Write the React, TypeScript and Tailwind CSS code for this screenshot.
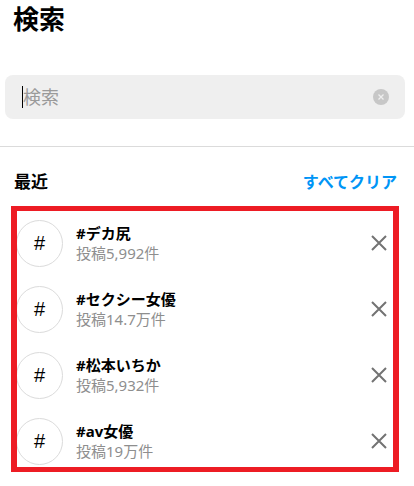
import React from "react";

const items = [
  { tag: "#デカ尻", count: "投稿5,992件" },
  { tag: "#セクシー女優", count: "投稿14.7万件" },
  { tag: "#松本いちか", count: "投稿5,932件" },
  { tag: "#av女優", count: "投稿19万件" },
];

const font = { fontFamily: '"Noto Sans", "Noto Sans CJK JP", sans-serif' };

function CloseIcon() {
  return (
    <svg width="16" height="16" viewBox="0 0 16 16" fill="none">
      <path d="M1 1L15 15M15 1L1 15" stroke="#737373" strokeWidth="2" strokeLinecap="butt" />
    </svg>
  );
}

export default function App() {
  return (
    <div className="w-[414px] h-[486px] bg-white text-black overflow-hidden" style={font}>
      <h1 className="px-[13px] leading-[38px] text-[26px] font-bold">検索</h1>

      <div className="ml-[5px] mr-[9px] mt-[37px] h-[44px] rounded-[8px] bg-[#efefef] flex items-center pl-[17px] pr-[16px]">
        <div className="flex items-center flex-1">
          <span className="w-px h-[22px] bg-black" />
          <span className="text-[18px] text-[#9a9a9a] leading-none">検索</span>
        </div>
        <div className="w-4 h-4 rounded-full bg-[#c7c7c7] flex items-center justify-center">
          <svg width="6" height="6" viewBox="0 0 6 6">
            <path d="M0.5 0.5L5.5 5.5M5.5 0.5L0.5 5.5" stroke="#efefef" strokeWidth="1.3" />
          </svg>
        </div>
      </div>

      <div className="mt-[27px] h-px bg-[#dbdbdb]" />

      <div className="mt-[23px] h-6 px-[14px] flex items-center justify-between">
        <span className="text-[17px] font-bold">最近</span>
        <span className="text-[16px] font-bold text-[#0095f6] mr-[3px]">すべてクリア</span>
      </div>

      <div className="relative mt-[16px]">
        {items.map((it) => (
          <div key={it.tag} className="h-[66px] flex items-center pl-[16px] pr-[27px]">
            <div className="w-[47px] h-[47px] rounded-full border border-[#dbdbdb] flex items-center justify-center shrink-0">
              <span className="text-[20px] leading-none" style={{ fontFamily: '"Liberation Sans", sans-serif' }}>#</span>
            </div>
            <div className="ml-[13px] flex-1 flex flex-col">
              <span className="text-[15px] leading-5 font-bold">{it.tag}</span>
              <span className="text-[15px] leading-5 text-[#8e8e8e]">{it.count}</span>
            </div>
            <CloseIcon />
          </div>
        ))}
        <div className="absolute left-[11px] top-[-4px] w-[388px] h-[266px] border-x-[6px] border-y-[5px] border-[#ed1c24] pointer-events-none" />
      </div>
    </div>
  );
}
